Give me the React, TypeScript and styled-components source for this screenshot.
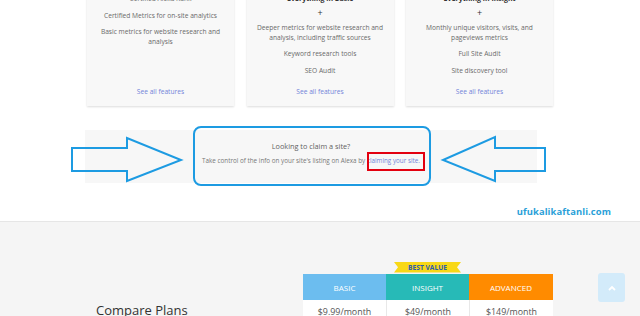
import React from "react";
import styled, { createGlobalStyle } from "styled-components";

const GlobalStyle = createGlobalStyle`
  html, body { margin: 0; padding: 0; background: #ffffff; overflow: hidden; }
  body { font-family: "Open Sans", "Liberation Sans", sans-serif; width: 640px; height: 316px; }
  * { box-sizing: border-box; }
`;

const Page = styled.div`
  width: 640px;
  height: 316px;
  overflow: hidden;
  display: flex;
  flex-direction: column;
`;

const Top = styled.section`
  margin-top: -20px;
  display: flex;
  flex-direction: column;
`;

const CardRow = styled.div`
  display: grid;
  grid-template-columns: repeat(3, 147px);
  column-gap: 12.5px;
  justify-content: center;
`;

const Card = styled.div`
  background: #f8f8f8;
  box-shadow: 0 1px 2px rgba(0, 0, 0, 0.14);
  padding: 14px 6px 10px;
  display: flex;
  flex-direction: column;
  align-items: center;
  text-align: center;
  height: 126px;
`;

const CardHeading = styled.div`
  font-size: 7px;
  line-height: 9.5px;
  font-weight: 700;
  color: #333;
`;

const Plus = styled.div`
  font-size: 9px;
  line-height: 10px;
  color: #333;
  margin-top: 4px;
`;

const Feature = styled.div<{ $first?: boolean }>`
  font-size: 6.65px;
  line-height: 9.5px;
  color: #6a6a6a;
  margin-top: ${(p) => (p.$first ? "5.5px" : "7px")};
  white-space: nowrap;
`;

const FeatureTop = styled(Feature)`
  margin-top: 0;
`;

const SeeAll = styled.a`
  margin-top: auto;
  font-size: 6.65px;
  line-height: 9.5px;
  color: #7384d8;
  text-decoration: none;
`;

const ClaimWrap = styled.div`
  position: relative;
  margin-top: 24px;
  height: 53px;
`;

const Band = styled.div`
  margin-left: 85px;
  width: 452px;
  height: 53px;
  background: #f7f7f7;
  display: flex;
  flex-direction: column;
  align-items: center;
  padding-top: 11px;
`;

const BandTitle = styled.div`
  font-size: 7.3px;
  line-height: 10px;
  color: #5f5f5f;
`;

const BandText = styled.div`
  margin-top: 5px;
  font-size: 6.3px;
  line-height: 10px;
  color: #777;
  white-space: nowrap;
`;

const BandLink = styled.a`
  color: #7384d8;
  text-decoration: none;
`;

const Annotations = styled.svg`
  position: absolute;
  left: 0;
  top: -10px;
  width: 640px;
  height: 70px;
  pointer-events: none;
`;

const Watermark = styled.div`
  margin-top: 23px;
  align-self: flex-end;
  margin-right: 29px;
  font-size: 9.4px;
  line-height: 12px;
  font-weight: 700;
  color: #2a9fd8;
  letter-spacing: 0.1px;
`;

const Lower = styled.section`
  margin-top: 3px;
  border-top: 1px solid #e6e6e6;
  background: #f5f5f5;
  flex: 1;
  position: relative;
  padding-top: 52px;
  display: grid;
  grid-template-columns: 303px 250px;
`;

const CompareTitle = styled.h2`
  margin: 0;
  padding: 28px 0 0 96px;
  font-size: 13px;
  line-height: 16px;
  font-weight: 400;
  color: #333;
  white-space: nowrap;
`;

const PlanTable = styled.div`
  display: grid;
  grid-template-columns: 83px 83px 84px;
`;

const PlanColumn = styled.div`
  position: relative;
  display: flex;
  flex-direction: column;
`;

const PlanHeader = styled.div<{ $bg: string }>`
  height: 26px;
  background: ${(p) => p.$bg};
  color: #fff;
  font-size: 8px;
  display: flex;
  align-items: center;
  justify-content: center;
  padding-top: 1px;
`;

const PriceCell = styled.div<{ $first?: boolean }>`
  background: #fff;
  border-left: ${(p) => (p.$first ? "none" : "1px solid #e8e8e8")};
  height: 30px;
  padding-top: 6px;
  text-align: center;
  font-size: 8.9px;
  line-height: 12px;
  color: #555;
`;

const Ribbon = styled.div`
  position: absolute;
  left: 8px;
  top: -12px;
  width: 67px;
  height: 10.5px;
  display: flex;
  align-items: center;
  justify-content: center;
`;

const RibbonShape = styled.svg`
  position: absolute;
  inset: 0;
  width: 100%;
  height: 100%;
`;

const RibbonText = styled.span`
  position: relative;
  font-size: 6.6px;
  font-weight: 700;
  color: #2c5bb0;
  letter-spacing: 0.05px;
`;

const ScrollTop = styled.button`
  position: absolute;
  left: 598px;
  top: 51px;
  width: 27px;
  height: 29px;
  border: none;
  border-radius: 3px;
  background: #d3ebfa;
  display: flex;
  align-items: center;
  justify-content: center;
  padding: 0;
`;

const plans = [
  { name: "BASIC", color: "#6cbdef", price: "$9.99/month" },
  { name: "INSIGHT", color: "#27bab7", price: "$49/month", best: true },
  { name: "ADVANCED", color: "#ff8b00", price: "$149/month" },
];

export default function App() {
  return (
    <>
      <GlobalStyle />
      <Page>
        <Top>
          <CardRow>
            <Card>
              <FeatureTop>Certified Alexa Rank</FeatureTop>
              <Feature>Certified Metrics for on-site analytics</Feature>
              <Feature>
                Basic metrics for website research and
                <br />
                analysis
              </Feature>
              <SeeAll href="#">See all features</SeeAll>
            </Card>
            <Card>
              <CardHeading>Everything in Basic</CardHeading>
              <Plus>+</Plus>
              <Feature $first>
                Deeper metrics for website research and
                <br />
                analysis, including traffic sources
              </Feature>
              <Feature>Keyword research tools</Feature>
              <Feature>SEO Audit</Feature>
              <SeeAll href="#">See all features</SeeAll>
            </Card>
            <Card>
              <CardHeading>Everything in Insight</CardHeading>
              <Plus>+</Plus>
              <Feature $first>
                Monthly unique visitors, visits, and
                <br />
                pageviews metrics
              </Feature>
              <Feature>Full Site Audit</Feature>
              <Feature>Site discovery tool</Feature>
              <SeeAll href="#">See all features</SeeAll>
            </Card>
          </CardRow>

          <ClaimWrap>
            <Band>
              <BandTitle>Looking to claim a site?</BandTitle>
              <BandText>
                Take control of the info on your site's listing on Alexa by{" "}
                <BandLink href="#">claiming your site.</BandLink>
              </BandText>
            </Band>
            <Annotations viewBox="0 120 640 70">
              <polygon
                points="72,148 127,148 127,138 181,160 127,181 127,171 72,171"
                fill="none"
                stroke="#1d9be2"
                strokeWidth="2"
                strokeLinejoin="miter"
              />
              <polygon
                points="545,148 495,148 495,137 443,160 495,181 495,171 545,171"
                fill="none"
                stroke="#1d9be2"
                strokeWidth="2"
                strokeLinejoin="miter"
              />
              <rect x="194" y="127" width="236" height="58" rx="7" fill="none" stroke="#1d9be2" strokeWidth="2" />
              <rect x="368" y="153" width="56" height="17" fill="none" stroke="#e3000f" strokeWidth="2" />
            </Annotations>
          </ClaimWrap>

          <Watermark>ufukalikaftanli.com</Watermark>
        </Top>

        <Lower>
          <CompareTitle>Compare Plans</CompareTitle>
          <PlanTable>
            {plans.map((p, i) => (
              <PlanColumn key={p.name}>
                {p.best && (
                  <Ribbon>
                    <RibbonShape viewBox="0 0 67 10.5" preserveAspectRatio="none">
                      <polygon points="0,0 67,0 63,5.25 67,10.5 0,10.5 4,5.25" fill="#f8d816" />
                    </RibbonShape>
                    <RibbonText>BEST VALUE</RibbonText>
                  </Ribbon>
                )}
                <PlanHeader $bg={p.color}>{p.name}</PlanHeader>
                <PriceCell $first={i === 0}>{p.price}</PriceCell>
              </PlanColumn>
            ))}
          </PlanTable>
          <ScrollTop aria-label="Back to top">
            <svg width="8" height="6" viewBox="0 0 8 6">
              <polyline points="1,5 4,2 7,5" fill="none" stroke="#fff" strokeWidth="1.8" />
            </svg>
          </ScrollTop>
        </Lower>
      </Page>
    </>
  );
}
